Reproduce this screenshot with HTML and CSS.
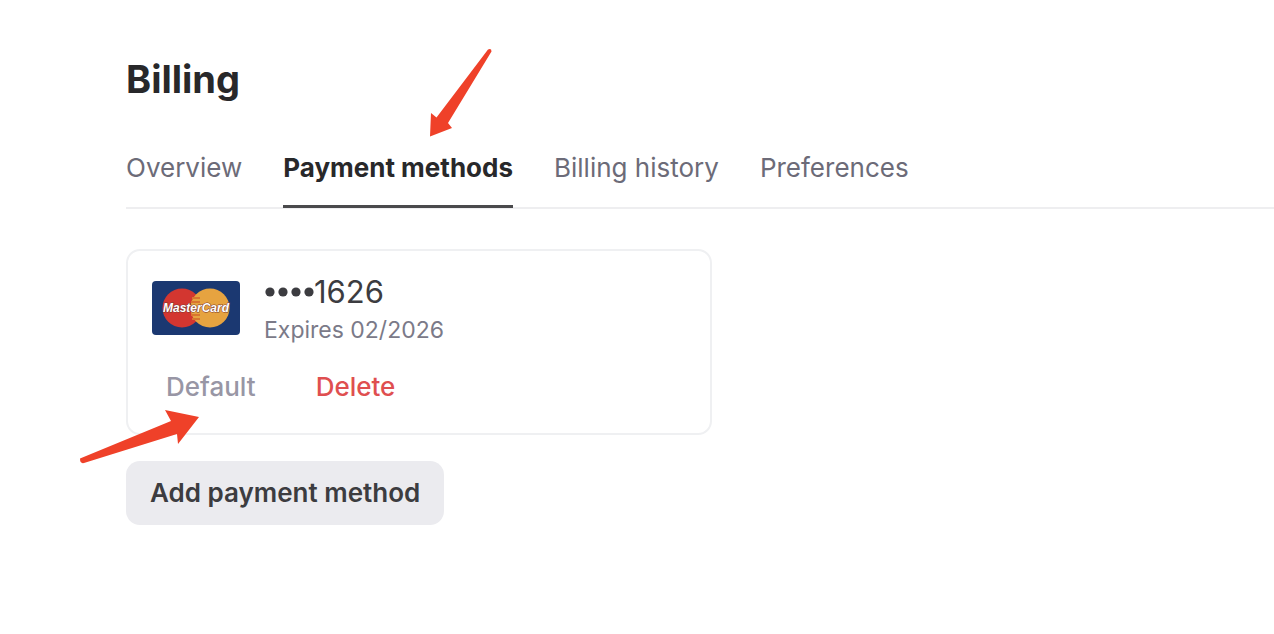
FILE: index.html
```html
<!DOCTYPE html>
<html lang="en">
<head>
<meta charset="utf-8">
<meta name="viewport" content="width=device-width, initial-scale=1">
<title>Billing</title>
<link rel="stylesheet" href="styles.css">
</head>
<body>
<main class="page">
  <h1 class="title">Billing</h1>
  <nav class="tabs" aria-label="Billing sections">
    <a class="tab" href="#overview">Overview</a>
    <a class="tab tab-active" href="#methods" aria-current="page">Payment methods</a>
    <a class="tab" href="#history">Billing history</a>
    <a class="tab" href="#preferences">Preferences</a>
  </nav>
  <section class="card" aria-label="Saved card">
    <div class="card-info">
      <svg class="brand" viewBox="0 0 88 54" role="img" aria-label="MasterCard">
        <rect width="88" height="54" rx="4" fill="#1b3871"/>
        <circle cx="30" cy="27" r="19.5" fill="#d33630"/>
        <circle cx="58" cy="27" r="19.5" fill="#e6a340"/>
        <path d="M40 17h8M39 21h9M39 34h9M40 38h8" stroke="#d9752f" stroke-width="2"/>
        <text class="brand-text" x="44" y="31" text-anchor="middle">MasterCard</text>
      </svg>
      <div class="details">
        <div class="number"><svg class="dots" viewBox="0 0 50 12" role="img" aria-label="Ending in"><circle cx="6" cy="6" r="4.6"/><circle cx="19" cy="6" r="4.6"/><circle cx="32" cy="6" r="4.6"/><circle cx="45" cy="6" r="4.6"/></svg><span>1626</span></div>
        <div class="expiry">Expires 02/2026</div>
      </div>
    </div>
    <div class="actions">
      <button class="action" type="button">Default</button>
      <button class="action action-delete" type="button">Delete</button>
    </div>
  </section>
  <button class="add" type="button">Add payment method</button>
  <svg class="arrow arrow-tab" viewBox="0 0 64 90" aria-hidden="true"><path d="M59 1.500Q62.500 0 62.500 3.500L19 75L23 80L1 88.500L2 65L7.500 69.500Z"/></svg>
  <svg class="arrow arrow-default" viewBox="0 0 122 56" aria-hidden="true"><path d="M1 49.500L92 12L86 1L120 8L99 35L98 25L5 54Q1 55 1 49.500Z"/></svg>
</main>
</body>
</html>
```
FILE: styles.css
```css
* { box-sizing: border-box; }
body {
  margin: 0;
  background: #fff;
  color: #28282a;
  font-family: Inter, "Liberation Sans", sans-serif;
}
.page {
  position: relative;
  padding: 55px 0 55px 126px;
}
.title {
  margin: 0;
  font-size: 38px;
  line-height: 48px;
  font-weight: 700;
}
.tabs {
  display: flex;
  gap: 41px;
  margin-top: 47px;
  border-bottom: 2px solid #eeeef0;
}
.tab {
  padding-bottom: 19px;
  margin-bottom: -1px;
  border-bottom: 3px solid transparent;
  color: #6c6b78;
  font-size: 26px;
  line-height: 36px;
  text-decoration: none;
  white-space: nowrap;
}
.tab-active {
  border-color: #4a4a4c;
  color: #28282a;
  font-weight: 700;
}
.card {
  max-width: 586px;
  margin-top: 40px;
  padding: 22px 24px;
  border: 2px solid #eff0f2;
  border-radius: 14px;
}
.card-info {
  display: flex;
  align-items: flex-start;
  gap: 24px;
}
.brand {
  width: 88px;
  height: 54px;
  margin-top: 8px;
}
.brand-text {
  fill: #fff;
  stroke: #7d3a30;
  stroke-width: 1px;
  paint-order: stroke;
  font: italic 700 12px "Liberation Sans", sans-serif;
}
.number {
  display: flex;
  align-items: center;
  color: #3c3c40;
  font-size: 31px;
  line-height: 38px;
}
.dots {
  width: 50px;
  height: 12px;
  fill: currentColor;
}
.expiry {
  color: #7b7a88;
  font-size: 23px;
  line-height: 38px;
}
.actions {
  display: flex;
  gap: 60px;
  padding: 20px 14px 6px;
}
.action {
  padding: 0;
  border: 0;
  background: none;
  color: #9896a5;
  font: 500 26px/36px Inter, "Liberation Sans", sans-serif;
}
.action-delete { color: #df4f50; }
.add {
  margin-top: 26px;
  padding: 14px 24px;
  border: 0;
  border-radius: 14px;
  background: #ebebef;
  color: #3c3c40;
  font: 600 26px/36px Inter, "Liberation Sans", sans-serif;
}
.arrow {
  position: absolute;
  fill: #ef4129;
  pointer-events: none;
}
.arrow-tab {
  top: 48px;
  left: 429px;
  width: 64px;
  height: 90px;
}
.arrow-default {
  top: 409px;
  left: 79px;
  width: 122px;
  height: 56px;
}
```
